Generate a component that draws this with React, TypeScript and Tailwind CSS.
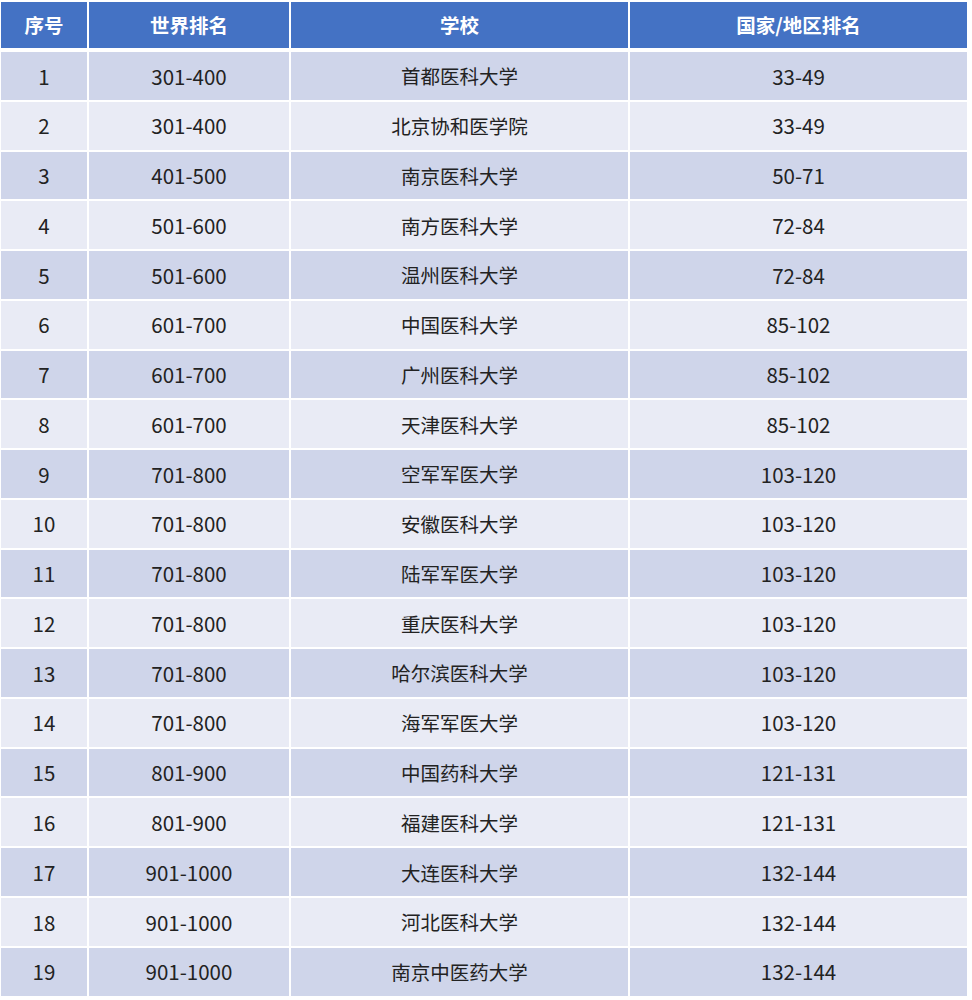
const rows: [string, string, string, string][] = [
  ["1", "301-400", "首都医科大学", "33-49"],
  ["2", "301-400", "北京协和医学院", "33-49"],
  ["3", "401-500", "南京医科大学", "50-71"],
  ["4", "501-600", "南方医科大学", "72-84"],
  ["5", "501-600", "温州医科大学", "72-84"],
  ["6", "601-700", "中国医科大学", "85-102"],
  ["7", "601-700", "广州医科大学", "85-102"],
  ["8", "601-700", "天津医科大学", "85-102"],
  ["9", "701-800", "空军军医大学", "103-120"],
  ["10", "701-800", "安徽医科大学", "103-120"],
  ["11", "701-800", "陆军军医大学", "103-120"],
  ["12", "701-800", "重庆医科大学", "103-120"],
  ["13", "701-800", "哈尔滨医科大学", "103-120"],
  ["14", "701-800", "海军军医大学", "103-120"],
  ["15", "801-900", "中国药科大学", "121-131"],
  ["16", "801-900", "福建医科大学", "121-131"],
  ["17", "901-1000", "大连医科大学", "132-144"],
  ["18", "901-1000", "河北医科大学", "132-144"],
  ["19", "901-1000", "南京中医药大学", "132-144"],
];

const cols = ["w-[86px]", "w-[200px]", "w-[337px]", "w-[337px]"];

export default function App() {
  return (
    <div
      className="w-[972px] h-[1000px] bg-white pl-[1px] pt-[2px] text-[19.5px] text-[#222222]"
      style={{ fontFamily: '"Noto Sans CJK SC", "Noto Sans", sans-serif' }}
    >
      <div className="flex gap-[2px] h-[46px] mb-[4px]">
        {["序号", "世界排名", "学校", "国家/地区排名"].map((h, i) => (
          <div
            key={h}
            className={`${cols[i]} bg-[#4472c4] text-white font-bold flex items-center justify-center`}
          >
            {h}
          </div>
        ))}
      </div>
      <div className="flex flex-col gap-[2px]">
        {rows.map((r, ri) => (
          <div key={ri} className="flex gap-[2px] h-[47.78px]">
            {r.map((c, i) => (
              <div
                key={i}
                className={`${cols[i]} ${ri % 2 === 0 ? "bg-[#cfd5ea]" : "bg-[#e9ebf5]"} ${i === 2 ? "" : "text-[20.5px]"} flex items-center justify-center`}
              >
                {c}
              </div>
            ))}
          </div>
        ))}
      </div>
    </div>
  );
}
